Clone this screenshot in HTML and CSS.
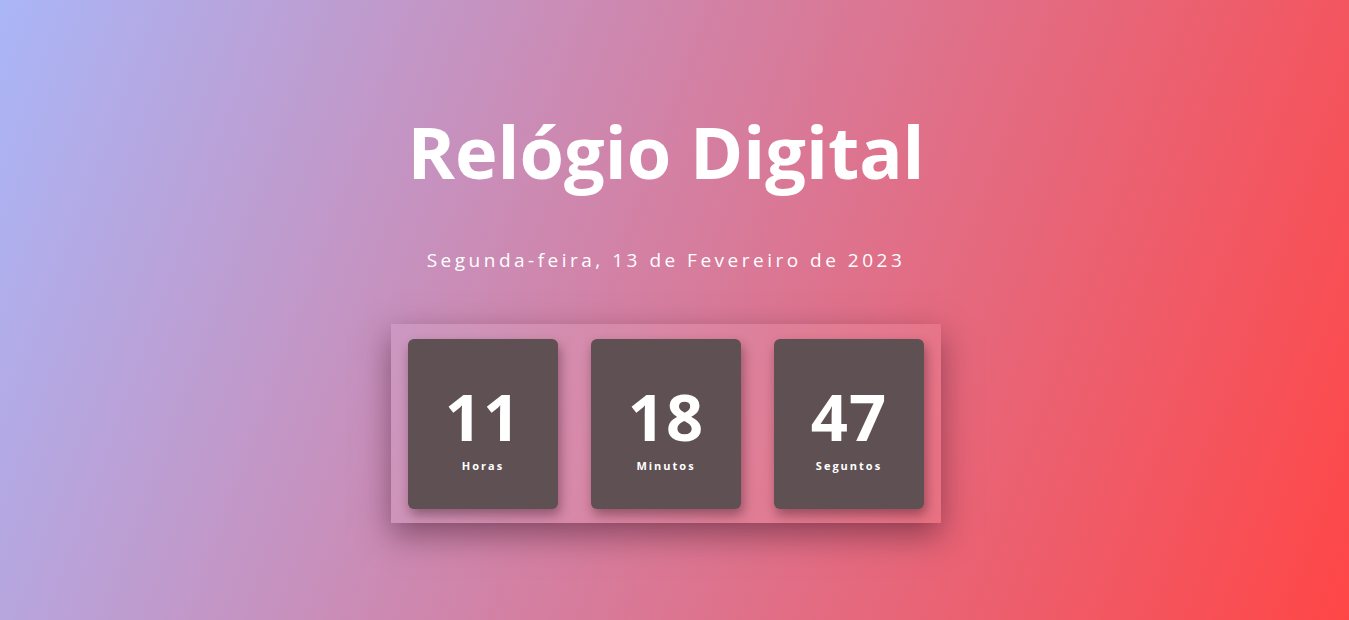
FILE: index.html
```html
<!DOCTYPE html>
<html lang="pt-BR">
<head>
<meta charset="utf-8">
<title>Relógio Digital</title>
<link rel="stylesheet" href="styles.css">
</head>
<body>
<main class="page">
  <h1 class="title">Relógio Digital</h1>
  <p class="date">Segunda-feira, 13 de Fevereiro de 2023</p>
  <section class="clock">
    <div class="unit"><span class="num">11</span><span class="label">Horas</span></div>
    <div class="unit"><span class="num">18</span><span class="label">Minutos</span></div>
    <div class="unit"><span class="num">47</span><span class="label">Seguntos</span></div>
  </section>
</main>
</body>
</html>
```

FILE: styles.css
```css
* { box-sizing: border-box; }
html, body { margin: 0; height: 100%; }
body {
  font-family: "Open Sans", "Noto Sans", sans-serif;
  color: #fff;
  background: linear-gradient(110deg, #aab6f8 0%, #d282a6 45%, #ff4646 100%);
  overflow: hidden;
}
.page {
  height: 100%;
  display: flex;
  flex-direction: column;
  align-items: center;
  padding: 106px 17px 0 0;
}
.title {
  margin: 0;
  font-size: 72px;
  font-weight: 700;
  line-height: 90px;
}
.date {
  margin: 51px 0 0;
  font-size: 19px;
  letter-spacing: 3.5px;
  line-height: 26px;
}
.clock {
  margin-top: 51px;
  display: flex;
  gap: 33px;
  padding: 15px 17px 14px;
  background: rgba(255, 255, 255, 0.08);
  box-shadow: 0 12px 30px rgba(60, 20, 40, 0.5);
}
.unit {
  width: 150px;
  height: 170px;
  padding-top: 8px;
  background: #5e5053;
  border-radius: 6px;
  display: flex;
  flex-direction: column;
  align-items: center;
  justify-content: center;
  box-shadow: 2px 6px 12px rgba(40, 10, 20, 0.4);
}
.num {
  font-size: 65px;
  font-weight: 700;
  line-height: 1;
  letter-spacing: 1px;
}
.label {
  margin-top: 10px;
  font-size: 11px;
  font-weight: 700;
  letter-spacing: 2px;
  line-height: 14px;
}
```
